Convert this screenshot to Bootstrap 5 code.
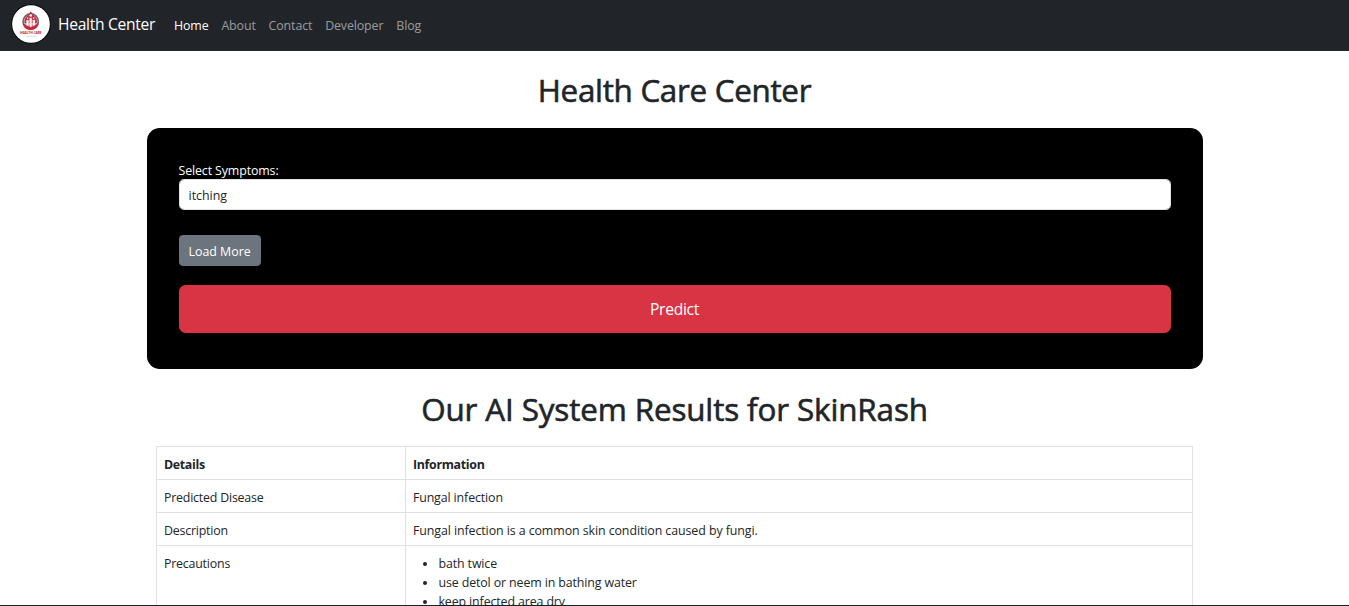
<!DOCTYPE html>
<html lang="en">
<head>
<meta charset="utf-8">
<meta name="viewport" content="width=device-width, initial-scale=1">
<title>Health Care Center</title>
<link href="https://cdn.jsdelivr.net/npm/bootstrap@5.3.0/dist/css/bootstrap.min.css" rel="stylesheet">
<style>
  html { font-size: 12.8px; height: 100%; }
  body { font-family: "Segoe UI", "Open Sans", sans-serif; font-size: 12.4px; line-height: 19.2px; letter-spacing: -.12px; height: 100%; }
  .screen { height: 100vh; border-bottom: 1px solid #14222f; }
  .topbar { height: 51px; background: #212529; }
  .brand-text { font-size: 15.6px; letter-spacing: -.3px; margin: 0 19px 2px 7px; }
  .topbar .nav-link { color: rgba(255,255,255,.55); padding: 0; margin-right: 12.9px; }
  .topbar .nav-link.active { color: #fff; }
  .page { width: 1056px; }
  .title { font-size: 31.4px; line-height: 38.4px; font-weight: 500; letter-spacing: -.3px; margin: 0; padding: 20.4px 0 18.2px; text-align: center; -webkit-text-stroke: .6px currentColor; }
  .title-results { letter-spacing: -.13px; padding: 21.4px 0 17.2px; }
  .panel { background: #000; border-radius: 12.8px; padding: 34px 32px 36px; height: 241px; }
  .panel label { line-height: 17.2px; }
  .panel .form-control { height: 31px; padding: 2px 9px 0; font-size: 12.4px; border-color: #dee2e6; border-radius: 4.8px; margin-bottom: 25px; }
  .btn-load { height: 31px; padding: 1px 9px 0; font-size: 12.4px; line-height: 29px; border-radius: 3.8px; background: #6c757d; margin-bottom: 19px; }
  .btn-predict { height: 48px; padding: 0; line-height: 45px; font-size: 15.6px; letter-spacing: -.3px; border-radius: 6.4px; background: #d93444; border-color: #d93444; }
  .results { padding: 0 9.6px; }
  .results .table { table-layout: fixed; line-height: 19px; }
  .results .table th, .results .table td { padding: 8px 6.4px 5px 6.8px; }
  .results .table td:first-child { letter-spacing: -.2px; }
  .results .table .long-text { letter-spacing: -.08px; }
  .results th { letter-spacing: -.3px; }
  .results ul { padding-left: 25.6px; margin: 0 0 12.8px; }
</style>
</head>
<body>
<div class="screen overflow-hidden">
  <nav class="topbar d-flex align-items-center">
    <svg width="40" height="40" viewBox="0 0 40 40" style="margin:-3px 0 0 11px" role="img" aria-label="Health Care logo">
      <circle cx="20" cy="20" r="19.4" fill="#fff" stroke="#08090a" stroke-width="1.1"/>
      <g transform="translate(0 -1)">
      <circle cx="19.7" cy="18.4" r="7.6" fill="none" stroke="#6d6f72" stroke-width="1.8"/>
      <path d="M19.7 8.3 17 12.3C14 14 12.8 17 13.6 20.5H25.8C26.6 17 25.4 14 22.4 12.3Z" fill="#c5283a"/>
      <path d="M11.8 20.2C12.6 24.5 15.5 26.9 19.7 26.9S26.8 24.5 27.6 20.2L25.2 21.5H14.2Z" fill="#c5283a"/>
      <circle cx="19.7" cy="12.5" r="1.3" fill="#fff"/>
      <circle cx="16.7" cy="15.1" r=".8" fill="#fff"/><circle cx="22.7" cy="15.1" r=".8" fill="#fff"/>
      <path d="M15.4 17h2.2v6.2l-2.2-1ZM18.6 15h2.2v8.8h-2.2ZM21.8 17H24v5.2l-2.2 1Z" fill="#fff" stroke="#f0b9c0" stroke-width=".4"/>
      </g>
      <text x="19.8" y="30.4" text-anchor="middle" textLength="21.5" lengthAdjust="spacingAndGlyphs" font-family="Open Sans, sans-serif" font-size="3.8" font-weight="700" fill="#c5283a">HEALTH CARE</text>
      <path d="M15 32.3h10" stroke="#ccc" stroke-width=".7"/>
    </svg>
    <a class="brand-text text-white text-decoration-none" href="#">Health Center</a>
    <div class="nav flex-nowrap">
      <a class="nav-link active" href="#">Home</a>
      <a class="nav-link" href="#">About</a>
      <a class="nav-link" href="#">Contact</a>
      <a class="nav-link" href="#">Developer</a>
      <a class="nav-link" href="#">Blog</a>
    </div>
  </nav>

  <main class="page mx-auto">
    <h1 class="title">Health Care Center</h1>
    <form class="panel text-white">
      <label class="d-block" for="symptoms">Select Symptoms:</label>
      <input class="form-control" id="symptoms" value="itching">
      <button type="button" class="btn btn-secondary btn-load d-block">Load More</button>
      <button type="button" class="btn btn-danger btn-predict w-100 d-block">Predict</button>
    </form>
    <h1 class="title title-results">Our AI System Results for SkinRash</h1>
    <div class="results">
      <table class="table table-bordered">
        <colgroup><col style="width:249px"><col></colgroup>
        <thead><tr><th>Details</th><th>Information</th></tr></thead>
        <tbody>
          <tr><td>Predicted Disease</td><td>Fungal infection</td></tr>
          <tr><td>Description</td><td class="long-text">Fungal infection is a common skin condition caused by fungi.</td></tr>
          <tr><td>Precautions</td><td><ul><li>bath twice</li><li>use detol or neem in bathing water</li><li>keep infected area dry</li></ul></td></tr>
        </tbody>
      </table>
    </div>
  </main>
</div>
<script src="https://cdn.jsdelivr.net/npm/bootstrap@5.3.0/dist/js/bootstrap.bundle.min.js"></script>
</body>
</html>
